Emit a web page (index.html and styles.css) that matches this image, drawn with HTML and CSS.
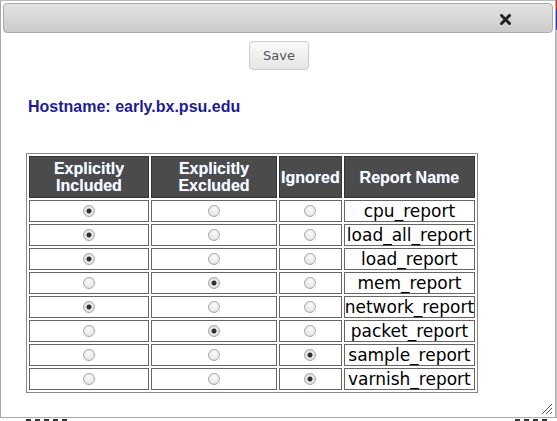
FILE: index.html
```html
<!DOCTYPE html>
<html>
<head>
<meta charset="utf-8">
<link rel="stylesheet" href="styles.css">
</head>
<body>
<div class="page">
  <div class="page-edge"></div>
  <div class="page-foot">
    <div class="frag"><i></i><i></i><i></i><i></i><i></i></div>
    <div class="frag"><i></i><i></i><i></i><i></i></div>
  </div>
</div>
<div class="dialog">
  <div class="titlebar">
    <svg class="close" width="11" height="11" viewBox="0 0 11 11"><path d="M1.5 1.5 L9.5 9.5 M9.5 1.5 L1.5 9.5" stroke="#222" stroke-width="3" stroke-linecap="square"/></svg>
  </div>
  <div class="content">
    <div class="actions"><button class="save">Save</button></div>
    <h2 class="host">Hostname: early.bx.psu.edu</h2>
    <table class="reports">
      <thead>
        <tr>
          <th class="c1">Explicitly<br>Included</th>
          <th class="c2">Explicitly<br>Excluded</th>
          <th class="c3">Ignored</th>
          <th class="c4">Report Name</th>
        </tr>
      </thead>
      <tbody>
        <tr><td><span class="radio on"></span></td><td><span class="radio"></span></td><td><span class="radio"></span></td><td class="name">cpu_report</td></tr>
        <tr><td><span class="radio on"></span></td><td><span class="radio"></span></td><td><span class="radio"></span></td><td class="name">load_all_report</td></tr>
        <tr><td><span class="radio on"></span></td><td><span class="radio"></span></td><td><span class="radio"></span></td><td class="name">load_report</td></tr>
        <tr><td><span class="radio"></span></td><td><span class="radio on"></span></td><td><span class="radio"></span></td><td class="name">mem_report</td></tr>
        <tr><td><span class="radio on"></span></td><td><span class="radio"></span></td><td><span class="radio"></span></td><td class="name">network_report</td></tr>
        <tr><td><span class="radio"></span></td><td><span class="radio on"></span></td><td><span class="radio"></span></td><td class="name">packet_report</td></tr>
        <tr><td><span class="radio"></span></td><td><span class="radio"></span></td><td><span class="radio on"></span></td><td class="name">sample_report</td></tr>
        <tr><td><span class="radio"></span></td><td><span class="radio"></span></td><td><span class="radio on"></span></td><td class="name">varnish_report</td></tr>
      </tbody>
    </table>
  </div>
  <svg class="grip" width="12" height="12" viewBox="0 0 12 12"><path d="M11 1 L1 11 M11 5 L5 11 M11 9 L9 11" stroke="#555" stroke-width="1"/></svg>
</div>
</body>
</html>
```
FILE: styles.css
```css
html, body {
  margin: 0;
  padding: 0;
  background: #fff;
  width: 557px;
  height: 421px;
  overflow: hidden;
}
.page {
  position: relative;
  width: 557px;
  height: 421px;
}
.page-edge {
  position: absolute;
  right: 0;
  top: 0;
  width: 1px;
  height: 418px;
  background: linear-gradient(#d22 0, #d22 10px, #33c 10px, #33c 30px, #ccc 30px);
}
.page-foot {
  position: absolute;
  left: 0;
  top: 417px;
  width: 557px;
  height: 4px;
  border-top: 1px solid #aaa;
  display: flex;
  justify-content: space-between;
  padding: 1px 10px 0 26px;
  box-sizing: border-box;
}
.frag {
  display: flex;
  gap: 4px;
}
.frag i {
  display: block;
  width: 5px;
  height: 3px;
  background: #333;
}
.dialog {
  position: absolute;
  left: 0;
  top: 0;
  width: 556px;
  height: 418px;
  box-sizing: border-box;
  border: 1px solid #aaa;
  border-top-color: #bbb;
  padding: 2px;
  background: #fff;
  font-family: "DejaVu Sans", sans-serif;
}
.titlebar {
  height: 30px;
  box-sizing: border-box;
  border: 1px solid #aaa;
  border-radius: 4px;
  background: linear-gradient(#e3e3e3, #cbcbcb);
  display: flex;
  align-items: center;
  justify-content: flex-end;
  padding-right: 41px;
}
.close {
  display: block;
  margin-top: 2px;
}
.content {
  padding: 8px 0 0 23px;
}
.actions {
  display: flex;
  justify-content: center;
  padding-right: 23px;
}
.save {
  width: 60px;
  height: 29px;
  border: 1px solid #ccc;
  border-radius: 4px;
  background: linear-gradient(#f9f9f9, #e6e6e6);
  color: #555;
  font: 13px "DejaVu Sans", sans-serif;
  padding: 0;
  margin-left: 2px;
}
.host {
  margin: 27px 0 0 2px;
  font: bold 16px/20px "Liberation Sans", Arial, sans-serif;
  color: #1c1c96;
}
.reports {
  margin-top: 36px;
  border: 1px solid #888;
  border-spacing: 2px;
}
.reports th {
  background: #4b4b4b;
  color: #fff;
  font: bold 16px/17px "Liberation Sans", Arial, sans-serif;
  text-shadow: 0 0 1px #6a8cc8;
  border: 1px solid #333;
  height: 42px;
  padding: 0 1px;
  box-sizing: border-box;
}
.c1 { width: 120px; }
.c2 { width: 126px; }
.c3 { width: 62px; }
.c4 { width: 128px; }
.reports td {
  border: 1px solid #666;
  height: 22px;
  box-sizing: border-box;
  padding: 0;
  text-align: center;
  vertical-align: middle;
  line-height: 18px;
}
.reports td.name {
  font: 17px/18px "DejaVu Sans", Verdana, sans-serif;
  color: #000;
  white-space: nowrap;
}
.radio {
  display: inline-block;
  width: 12px;
  height: 12px;
  box-sizing: border-box;
  border-radius: 50%;
  border: 1px solid #a8a8a8;
  background: radial-gradient(circle at 50% 35%, #fbfbfb, #dcdcdc);
  vertical-align: middle;
  position: relative;
  top: -1px;
}
.radio.on {
  background: radial-gradient(circle, #333 0, #333 2.2px, #e8e8e8 2.8px, #d8d8d8);
}
.grip {
  position: absolute;
  right: 2px;
  bottom: 2px;
}
```
